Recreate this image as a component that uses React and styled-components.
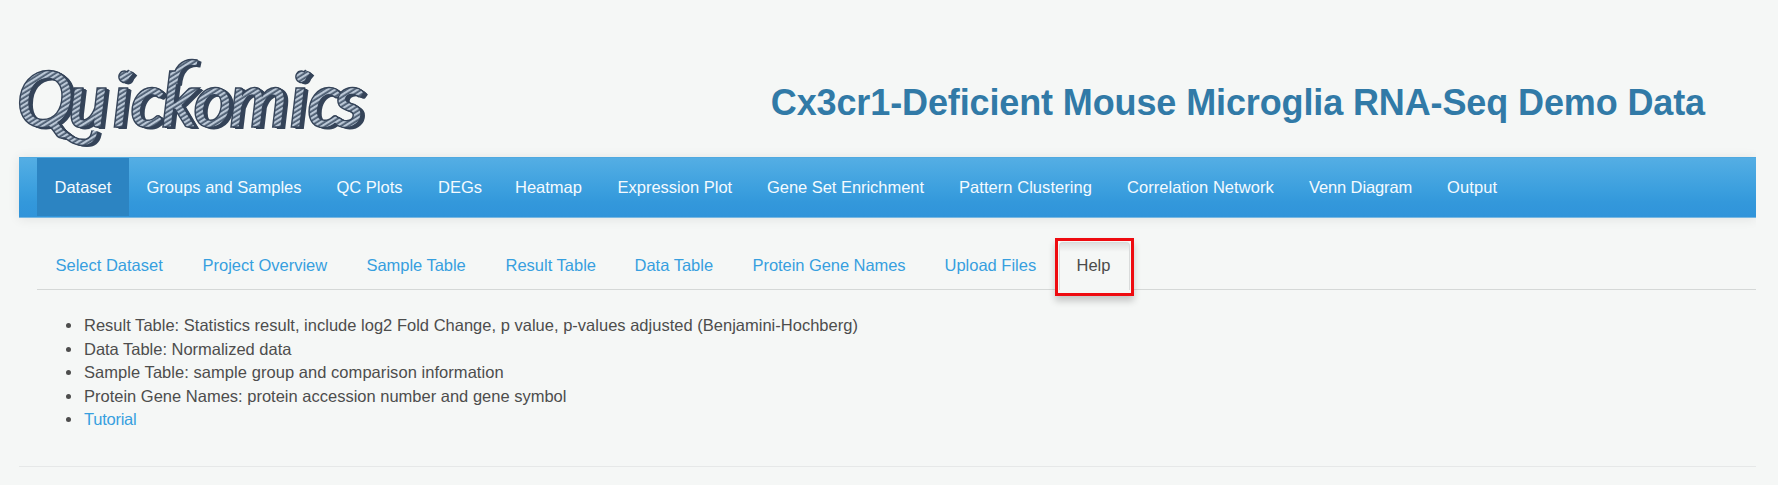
import React from "react";
import styled, { createGlobalStyle, css } from "styled-components";

const Global = createGlobalStyle`
  * { box-sizing: border-box; }
  body {
    margin: 0;
    background: #f5f7f6;
    color: #4d4d4d;
    font: 16.5px/23.5px "Liberation Sans", Arial, Helvetica, sans-serif;
  }
`;

const Page = styled.div`
  height: 485px;
  padding: 50px 22px 0 19px;
  overflow: hidden;
`;

const Header = styled.header`
  display: flex;
  justify-content: space-between;
  height: 107px;
`;

const Logo = styled.svg`
  width: 360px;
  height: 100px;
  overflow: visible;
`;

const Title = styled.h1`
  margin: 32px 51px 0 0;
  height: 42px;
  font-size: 36px;
  line-height: 42px;
  font-weight: 700;
  letter-spacing: ${(p) => p.$track}px;
  color: #317aa7;
  white-space: nowrap;
`;

const Bar = styled.nav`
  display: flex;
  height: 61px;
  padding: 0 0 1px 18px;
  border-top: 1px solid #4fa9e0;
  border-bottom: 1px solid #77b7e2;
  background: linear-gradient(#54aee4, #3b9fde 55%, #3398db 75%, #3094da);
  box-shadow: 0 1px 11px rgba(0, 0, 0, 0.085);
  clip-path: inset(-20px 0 -20px -20px);
`;

const BarItem = styled.a`
  flex: 0 0 ${(p) => p.$width}px;
  padding-left: 17.5px;
  line-height: 59px;
  letter-spacing: ${(p) => p.$track || 0}px;
  white-space: nowrap;
  color: #f4fafe;
  ${(p) => p.$active && css`background: #2c84c2;`}
`;

const Tabs = styled.div`
  display: flex;
  height: 52px;
  margin: 20px 0 0 18px;
  border-bottom: 1px solid #d5d8d7;
`;

const Tab = styled.a`
  flex: 0 0 ${(p) => p.$width}px;
  padding-left: 18.5px;
  line-height: 55px;
  letter-spacing: ${(p) => p.$track || 0}px;
  white-space: nowrap;
  color: #379fdf;
`;

const Highlight = styled.div`
  flex: 0 0 79px;
  height: 58px;
  border: 3px solid #ee0b10;
  padding: 1px;
  background: #f5f7f6;
  box-shadow: 0 5px 7px rgba(0, 0, 0, 0.2);
`;

const ActiveTab = styled.div`
  height: 48px;
  width: 71px;
  padding-left: 16.5px;
  border: 1px solid #d9dbdb;
  border-bottom: 0;
  border-radius: 4px 4px 0 0;
  line-height: 45px;
  color: #4b4b4b;
  background: linear-gradient(#dedfdf, #f5f7f6 9px);
`;

const Notes = styled.ul`
  margin: 24px 0 0 47px;
  padding: 0;
  list-style: none;
`;

const Note = styled.li`
  display: flex;
  align-items: center;
  height: 23.5px;
  letter-spacing: ${(p) => p.$track || 0}px;
  white-space: nowrap;
  &::before {
    content: "";
    width: 5px;
    height: 5px;
    margin-right: 13px;
    border-radius: 50%;
    background: #4d4d4d;
  }
`;

const Link = styled.a`
  color: #379fdf;
  letter-spacing: -0.25px;
`;

const Rule = styled.hr`
  height: 1px;
  margin: 34.5px 0 0;
  border: 0;
  background: #e6e8e8;
`;

const navItems = [
  ["Dataset", 92],
  ["Groups and Samples", 190],
  ["QC Plots", 101.5],
  ["DEGs", 77],
  ["Heatmap", 102.5],
  ["Expression Plot", 149.5],
  ["Gene Set Enrichment", 192, -0.04],
  ["Pattern Clustering", 168, 0.05],
  ["Correlation Network", 182, 0.05],
  ["Venn Diagram", 138, -0.12],
  ["Output", 85, 0.1],
];

const tabItems = [
  ["Select Dataset", 147],
  ["Project Overview", 164],
  ["Sample Table", 139, -0.04],
  ["Result Table", 129],
  ["Data Table", 118],
  ["Protein Gene Names", 192, -0.06],
  ["Upload Files", 129],
];

const notes = [
  ["Result Table: Statistics result, include log2 Fold Change, p value, p-values adjusted (Benjamini-Hochberg)", 0.01],
  ["Data Table: Normalized data", -0.02],
  ["Sample Table: sample group and comparison information", 0.05],
  ["Protein Gene Names: protein accession number and gene symbol", 0],
];

const shadowSteps = [4, 3, 2, 1];

function Wordmark() {
  return (
    <Logo viewBox="0 0 360 100" role="img" aria-label="Quickomics">
      <defs>
        <pattern id="rope" width="4" height="4" patternUnits="userSpaceOnUse" patternTransform="rotate(-32)">
          <rect width="4" height="4" fill="#4a5b70" />
          <rect width="4" height="2.2" fill="#bac7d6" />
        </pattern>
        <text id="word" y="76" fontFamily="Lato" fontSize="73" fontStyle="italic" fontWeight="400">
          <tspan x="-2" fontSize="75">Q</tspan>
          <tspan x="50">u</tspan>
          <tspan x="94">i</tspan>
          <tspan x="112">c</tspan>
          <tspan x="143">k</tspan>
          <tspan x="175">o</tspan>
          <tspan x="211">m</tspan>
          <tspan x="271">i</tspan>
          <tspan x="289">c</tspan>
          <tspan x="316">s</tspan>
        </text>
        <path id="swash" d="M29 73C45 80 52 95 68 92C74 90 75 86 76 81M156 34C157 20 164 10 178 13M107 28L112 22M284 28L289 22" />
      </defs>
      {shadowSteps.map((s) => (
        <g key={s} transform={`translate(${s} ${s * 0.4})`} stroke="#354459">
          <use href="#word" fill="#354459" strokeWidth="2" />
          <use href="#swash" fill="none" strokeWidth="6" />
        </g>
      ))}
      <use href="#word" fill="#354459" stroke="#354459" strokeWidth="3.5" />
      <use href="#swash" fill="none" stroke="#354459" strokeWidth="7.5" />
      <use href="#word" fill="url(#rope)" stroke="url(#rope)" strokeWidth="0.6" />
      <use href="#swash" fill="none" stroke="url(#rope)" strokeWidth="4.5" />
    </Logo>
  );
}

export default function App() {
  return (
    <>
      <Global />
      <Page>
        <Header>
          <Wordmark />
          <Title $track={-0.12}>Cx3cr1-Deficient Mouse Microglia RNA-Seq Demo Data</Title>
        </Header>
        <Bar>
          {navItems.map(([label, width, track], i) => (
            <BarItem key={label} $width={width} $track={track} $active={i === 0}>{label}</BarItem>
          ))}
        </Bar>
        <Tabs>
          {tabItems.map(([label, width, track]) => (
            <Tab key={label} $width={width} $track={track}>{label}</Tab>
          ))}
          <Highlight>
            <ActiveTab>Help</ActiveTab>
          </Highlight>
        </Tabs>
        <Notes>
          {notes.map(([text, track]) => <Note key={text} $track={track}>{text}</Note>)}
          <Note><Link>Tutorial</Link></Note>
        </Notes>
        <Rule />
      </Page>
    </>
  );
}
